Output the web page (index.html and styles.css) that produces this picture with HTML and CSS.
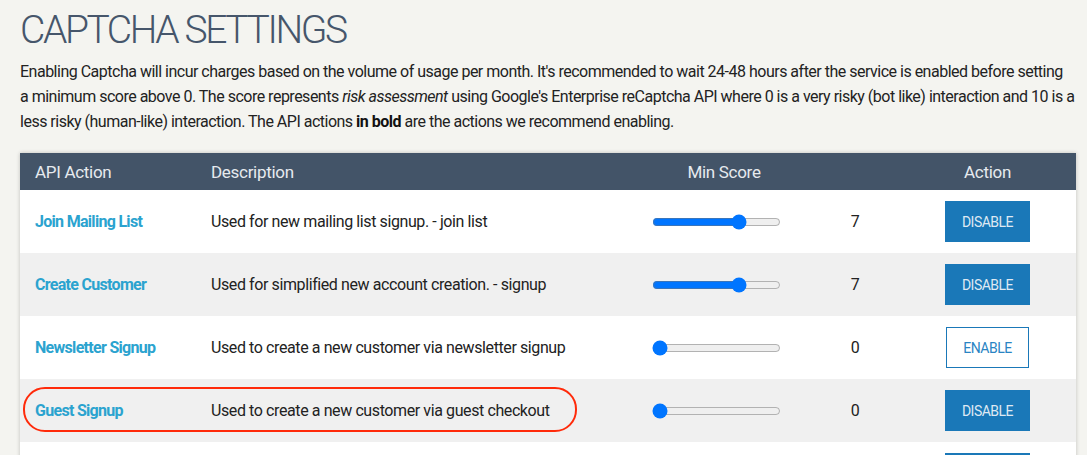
FILE: index.html
```html
<!DOCTYPE html>
<html lang="en">
<head>
<meta charset="utf-8">
<title>Captcha Settings</title>
<link rel="stylesheet" href="styles.css">
</head>
<body>
<main class="page">
  <h1 class="title">CAPTCHA SETTINGS</h1>
  <p class="intro">Enabling Captcha will incur charges based on the volume of usage per month. It's recommended to wait 24-48 hours after the service is enabled before setting<br>a minimum score above 0. The score represents <em>risk assessment</em> using Google's Enterprise reCaptcha API where 0 is a very risky (bot like) interaction and 10 is a less risky (human-like) interaction. The API actions <strong>in bold</strong> are the actions we recommend enabling.</p>

  <table class="grid">
    <colgroup>
      <col class="c-name"><col class="c-desc"><col class="c-range"><col class="c-val"><col class="c-act">
    </colgroup>
    <thead>
      <tr class="head">
        <th class="h-left">API Action</th>
        <th class="h-left">Description</th>
        <th class="h-center">Min Score</th>
        <th></th>
        <th class="h-center">Action</th>
      </tr>
    </thead>
    <tbody>
      <tr class="row">
        <td class="name"><a href="#">Join Mailing List</a></td>
        <td class="desc">Used for new mailing list signup. - join list</td>
        <td class="range"><input type="range" min="0" max="10" value="7"></td>
        <td class="val">7</td>
        <td class="act"><button class="btn btn-solid">DISABLE</button></td>
      </tr>
      <tr class="row alt">
        <td class="name"><a href="#">Create Customer</a></td>
        <td class="desc">Used for simplified new account creation. - signup</td>
        <td class="range"><input type="range" min="0" max="10" value="7"></td>
        <td class="val">7</td>
        <td class="act"><button class="btn btn-solid">DISABLE</button></td>
      </tr>
      <tr class="row">
        <td class="name"><a href="#">Newsletter Signup</a></td>
        <td class="desc">Used to create a new customer via newsletter signup</td>
        <td class="range"><input type="range" min="0" max="10" value="0"></td>
        <td class="val">0</td>
        <td class="act"><button class="btn btn-outline">ENABLE</button></td>
      </tr>
      <tr class="row alt marked">
        <td class="name"><a href="#">Guest Signup</a><span class="ring"></span></td>
        <td class="desc">Used to create a new customer via guest checkout</td>
        <td class="range"><input type="range" min="0" max="10" value="0"></td>
        <td class="val">0</td>
        <td class="act"><button class="btn btn-solid">DISABLE</button></td>
      </tr>
      <tr class="row">
        <td class="name"><a href="#">Customer Login</a></td>
        <td class="desc">Used for customer login. - login</td>
        <td class="range"><input type="range" min="0" max="10" value="0"></td>
        <td class="val">0</td>
        <td class="act"><button class="btn btn-solid">DISABLE</button></td>
      </tr>
    </tbody>
  </table>
</main>
</body>
</html>
```
FILE: styles.css
```css
html { overflow: hidden; }
body {
  margin: 0;
  background: #f4f4f0;
  font-family: Roboto, "Noto Sans", sans-serif;
  color: #222;
}
.page {
  padding: 0 8px 0 20px;
}
.title {
  margin: 8px 0 0;
  font-size: 39px;
  line-height: 44px;
  font-weight: 300;
  letter-spacing: -2.4px;
  color: #46566b;
}
.intro {
  margin: 7px 0 0;
  font-size: 16px;
  line-height: 25px;
  letter-spacing: -0.5px;
  color: #222;
}
.intro strong { font-weight: 700; color: #111; }

.grid {
  margin-top: 19px;
  width: 1056px;
  table-layout: fixed;
  border-collapse: collapse;
  background: #fff;
  box-shadow: 0 0 4px rgba(0, 0, 0, 0.22);
}
.c-name { width: 176px; }
.c-desc { width: 441px; }
.c-range { width: 174px; }
.c-val { width: 88px; }
.c-act { width: 177px; }

.head { background: #435468; height: 37px; }
.head th {
  font-size: 17px;
  font-weight: 400;
  letter-spacing: -0.3px;
  color: #e6eaee;
  padding: 0 15px;
}
.h-left { text-align: left; }
.h-center { text-align: center; }

.row { height: 63px; background: #fff; }
.row.alt { background: #f0f0f0; }
.row td {
  padding: 0 15px;
  font-size: 16px;
  letter-spacing: -0.4px;
  vertical-align: middle;
  white-space: nowrap;
}
.name a {
  color: #2ba3cf;
  font-weight: 700;
  letter-spacing: -0.7px;
  text-decoration: none;
}
.desc { color: #222; }
.row td.range { padding: 0 0 0 13px; }
.range input { display: block; margin: 2px; }
.val { text-align: center; color: #222; }
.act { text-align: center; }

.btn {
  display: inline-flex;
  align-items: center;
  justify-content: center;
  box-sizing: border-box;
  height: 41px;
  padding: 0 16px;
  font-family: Roboto, "Noto Sans", sans-serif;
  font-size: 14px;
  letter-spacing: -0.5px;
  border: 1px solid #1a78b8;
  border-radius: 0;
  cursor: pointer;
}
.btn-solid { background: #1a78b8; color: #dfe9f3; }
.btn-outline { background: #fff; color: #2a84c3; }

.marked td.name { position: relative; }
.ring {
  position: absolute;
  left: 3px;
  top: 8px;
  width: 554px;
  height: 45px;
  box-sizing: border-box;
  border: 2.5px solid #ff2a0a;
  border-radius: 22px;
  pointer-events: none;
}
```
